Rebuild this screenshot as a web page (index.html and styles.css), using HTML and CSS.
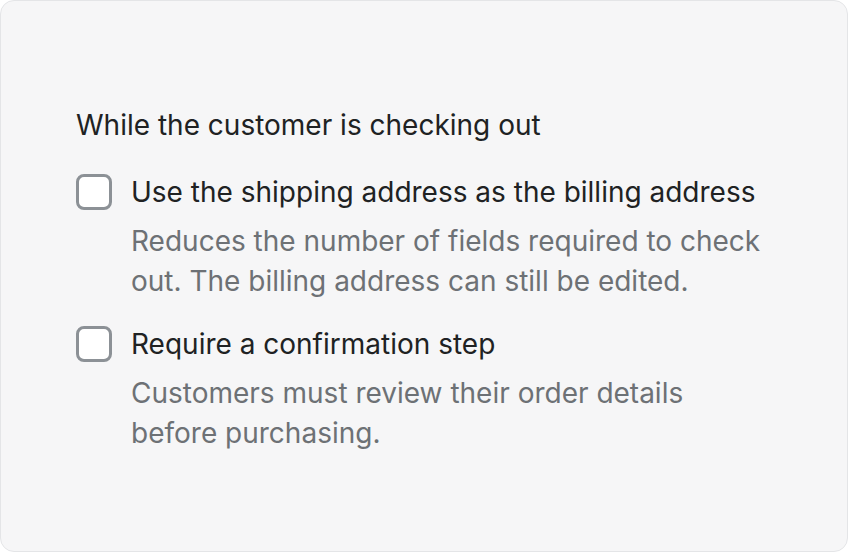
FILE: index.html
```html
<!DOCTYPE html>
<html>
<head>
<meta charset="utf-8">
<link rel="stylesheet" href="styles.css">
</head>
<body>
<div class="card">
  <div class="title">While the customer is checking out</div>
  <ul class="choices">
    <li class="choice">
      <div class="row">
        <span class="box"></span>
        <span class="label">Use the shipping address as the billing address</span>
      </div>
      <div class="help">Reduces the number of fields required to check out. The billing address can still be edited.</div>
    </li>
    <li class="choice">
      <div class="row">
        <span class="box"></span>
        <span class="label">Require a confirmation step</span>
      </div>
      <div class="help">Customers must review their order details before purchasing.</div>
    </li>
  </ul>
</div>
</body>
</html>
```

FILE: styles.css
```css
html, body {
  margin: 0;
  padding: 0;
  background: #ffffff;
}
body {
  font-family: Inter, "Noto Sans", sans-serif;
  font-size: 28px;
  line-height: 40px;
  color: #202223;
}
.card {
  box-sizing: border-box;
  width: 848px;
  height: 552px;
  background: #f6f6f7;
  border: 1px solid #e4e5e7;
  border-radius: 14px;
  padding: 104px 40px 0 75px;
}
.title {
  margin-bottom: 27px;
}
.choices {
  list-style: none;
  margin: 0;
  padding: 0;
  display: flex;
  flex-direction: column;
  gap: 23px;
}
.row {
  display: flex;
  align-items: center;
  gap: 19px;
}
.box {
  box-sizing: border-box;
  width: 36px;
  height: 36px;
  border: 3px solid #8c9196;
  border-radius: 8px;
  background: #ffffff;
  flex: none;
}
.help {
  margin-top: 9px;
  margin-left: 55px;
  color: #6d7175;
  width: 638px;
}
```
